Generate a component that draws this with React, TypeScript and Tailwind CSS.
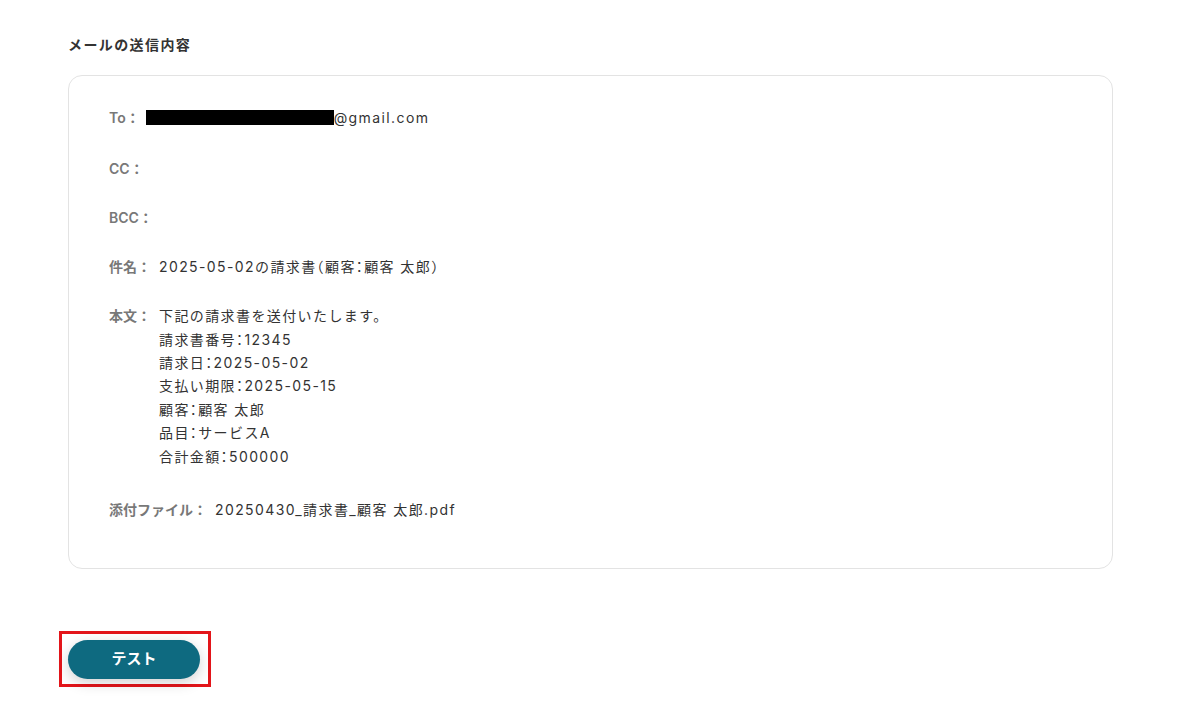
import React from "react";

const Row: React.FC<{ label: string; children?: React.ReactNode; className?: string; gap?: string }> = ({
  label,
  children,
  className = "",
  gap = "ml-[8px]",
}) => (
  <div className={`flex items-start ${className}`}>
    <span className="text-[#787878] font-semibold whitespace-nowrap tracking-normal">{label}</span>
    <div className={`${gap} text-[#333333] tracking-[0.1em] [font-feature-settings:'halt']`}>{children}</div>
  </div>
);

const App: React.FC = () => {
  const body = [
    "下記の請求書を送付いたします。",
    "請求書番号：12345",
    "請求日：2025-05-02",
    "支払い期限：2025-05-15",
    "顧客：顧客 太郎",
    "品目：サービスA",
    "合計金額：500000",
  ];

  return (
    <div
      className="min-h-[726px] w-[1185px] bg-white pt-[35px] pl-[68px]"
      style={{ fontFamily: "Inter, 'Noto Sans CJK JP', sans-serif" }}
    >
      <h2 className="text-[14px] leading-[20px] font-bold tracking-[0.1em] text-[#333333]">
        メールの送信内容
      </h2>

      <div className="mt-[20px] w-[1045px] h-[494px] rounded-[14px] border border-[#e3e3e3] pt-[30px] pl-[40px] text-[14px] leading-[23.4px]">
        <div className="flex flex-col gap-[25.6px]">
          <Row label="To：" gap="ml-[6px]">
            <span className="inline-flex items-center">
              <span className="inline-block w-[188px] h-[15px] bg-black" />
              <span>@gmail.com</span>
            </span>
          </Row>
          <Row label="CC：" />
          <Row label="BCC：" />
          <Row label="件名：">2025-05-02の請求書（顧客：顧客 太郎）</Row>
          <Row label="本文：">
            {body.map((line) => (
              <div key={line}>{line}</div>
            ))}
          </Row>
        </div>
        <Row label="添付ファイル：" className="mt-[30px]">
          20250430_請求書_顧客 太郎.pdf
        </Row>
      </div>

      <div className="mt-[62px] -ml-[9px] inline-block border-[3px] border-[#e3151a] pl-[6px] pr-[8px] pt-[6px] pb-[5px]">
        <button className="block w-[132px] h-[39px] rounded-full bg-[#0e6a80] text-white text-[15px] font-bold shadow-[0_4px_14px_rgba(0,0,0,0.18)]">
          テスト
        </button>
      </div>
    </div>
  );
};

export default App;
